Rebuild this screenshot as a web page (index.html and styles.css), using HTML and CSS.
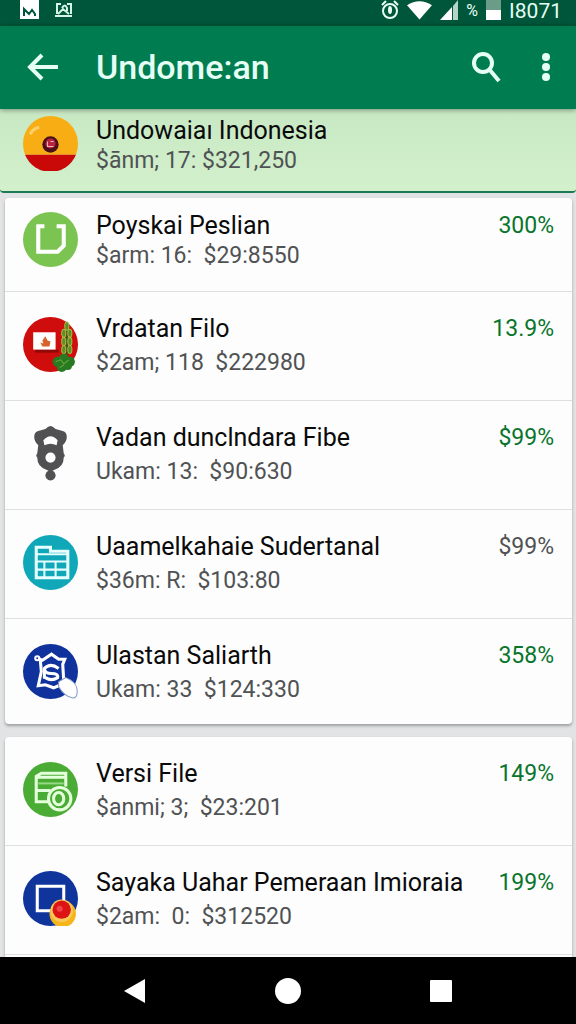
FILE: index.html
```html
<!DOCTYPE html>
<html lang="id">
<head>
  <meta charset="UTF-8" />
  <meta name="viewport" content="width=device-width, initial-scale=1" />
  <title>Undome:an</title>
  <link rel="stylesheet" href="styles.css">
</head>
<body>
  <div class="status">
    <svg class="status-icon" viewBox="0 0 20 20"><path fill="#fff" d="M0 0h19v19H0z"/><path fill="none" stroke="#00563a" stroke-width="2" d="M4 16V9l5 5 3-4 3 4v2"/></svg>
    <svg class="status-icon image" viewBox="0 0 18 20"><path fill="none" stroke="#d5f5e6" stroke-width="2" d="M6 4H2v10M12 4h4v10M0 16h17M3 14l5-5 6 5"/><path fill="none" stroke="#d5f5e6" stroke-width="2" d="M7 8q3-5 5 0v3"/></svg>
    <div class="status-right">
      <svg width="18" height="20" viewBox="0 0 18 20"><g fill="none" stroke="#e6fff4" stroke-width="2"><circle cx="9" cy="11" r="7"/><path d="M1 5l4-4M13 1l4 4"/></g><ellipse cx="9" cy="10" rx="2" ry="4" fill="#e6fff4"/></svg>
      <svg width="25" height="20" viewBox="0 0 26 20"><path fill="#fff" d="M13 20L0 5Q13-3 26 5z"/></svg>
      <svg width="18" height="20" viewBox="0 0 18 20"><path fill="#fff" d="M0 20L12 7v13z"/><path fill="#b5d3c6" d="M13 6l5-6v20h-5z"/></svg>
      <span class="percent">%</span>
      <svg width="15" height="20" viewBox="0 0 15 20"><path fill="#6a9c87" d="M0 0h15v10H0z"/><path fill="#fff" d="M0 10h15v10H0z"/></svg>
      <span class="clock">I8071</span>
    </div>
  </div>

  <header class="appbar">
    <button class="icon-button" aria-label="Kembali">
      <svg width="32" height="32" viewBox="0 0 32 32"><path fill="none" stroke="#e6fff4" stroke-width="4" d="M31 16H4M15 4L3 16l12 12"/></svg>
    </button>
    <h1>Undome:an</h1>
    <button class="icon-button" aria-label="Cari">
      <svg width="32" height="32" viewBox="0 0 32 32"><circle cx="13" cy="12" r="9" fill="none" stroke="#e6fff4" stroke-width="4"/><path stroke="#e6fff4" stroke-width="4" d="M19 18l10 12"/></svg>
    </button>
    <button class="icon-button more" aria-label="Menu">
      <svg width="8" height="28" viewBox="0 0 8 28"><g fill="#e6fff4"><circle cx="4" cy="4" r="4"/><circle cx="4" cy="14" r="4"/><circle cx="4" cy="24" r="4"/></g></svg>
    </button>
  </header>

  <main>
    <a class="row featured" href="#">
      <svg class="logo" viewBox="0 0 54 54"><path fill="#f9ad14" d="M0 27a27 27 0 0 1 54 0q0 6-2 11H2q-2-5-2-11z"/><path fill="#c90808" d="M2 38h50a27 27 0 0 1-50 0z"/><path fill="none" stroke="#fbd06a" stroke-width="3" d="M7 18q3-6 9-7"/><circle cx="27" cy="28" r="8" fill="#4a1018"/><circle cx="27" cy="27" r="5" fill="#b82340"/><path fill="none" stroke="#efb9c0" stroke-width="1" d="M24 25v5h6M27 25h3"/></svg>
      <div class="text">
        <div class="name">Undowaiaı Indonesia</div>
        <div class="detail">$ānm; 17: $321,250</div>
      </div>
    </a>

    <section class="card">
      <a class="row short" href="#">
        <svg class="logo" viewBox="0 0 54 54"><circle cx="27" cy="27" r="27" fill="#7cc451"/><path fill="none" stroke="#fff" stroke-width="4" d="M21 14h-6v25h19l6-6V14h-7"/></svg>
        <div class="text">
          <div class="name">Poyskai Peslian</div>
          <div class="detail">$arm: 16:&nbsp; $29:8550</div>
        </div>
        <div class="change">300%</div>
      </a>
      <a class="row" href="#">
        <svg class="logo" viewBox="0 0 54 54"><circle cx="27" cy="27" r="27" fill="#cf0d0d"/><path fill="#8f0909" d="M12 32h23v3H12z"/><path fill="#fff" d="M10 15h22v17H10z"/><path fill="#d9642b" d="M17 25l3 1-1-3 3-4 2 4 3 1-1 5h-7z"/><path stroke="#38591c" stroke-width="2" d="M44 7l-2 40"/><g fill="#5f8c24" stroke="#a3bd45" stroke-width="1"><ellipse cx="43" cy="9" rx="2" ry="4"/><ellipse cx="40" cy="16" rx="2" ry="4"/><ellipse cx="46" cy="16" rx="2" ry="4"/><ellipse cx="40" cy="24" rx="2" ry="4"/><ellipse cx="46" cy="24" rx="2" ry="4"/><ellipse cx="40" cy="32" rx="2" ry="4"/><ellipse cx="46" cy="32" rx="2" ry="4"/></g><g fill="#277a22"><circle cx="34" cy="44" r="5"/><circle cx="40" cy="41" r="5"/><circle cx="46" cy="44" r="5"/><circle cx="38" cy="49" r="5"/><circle cx="44" cy="48" r="4"/></g><path fill="none" stroke="#6dab35" stroke-width="1" d="M32 44l5-2 3 4 5-4M36 50l4-3"/></svg>
        <div class="text">
          <div class="name">Vrdatan Filo</div>
          <div class="detail">$2am; 118&nbsp; $222980</div>
        </div>
        <div class="change">13.9%</div>
      </a>
      <a class="row" href="#">
        <svg class="logo" viewBox="0 0 54 54"><path fill="#515154" fill-rule="evenodd" d="M27 0q2 0 5 3l7 2q4 1 4 6 0 4-4 8l1 8q2 2 0 4 0 9-9 12l-2 1a5 5 0 1 1-4 0l-2-1q-9-3-9-12-2-2 0-4l1-8q-4-4-4-8 0-5 4-6l7-2q3-3 5-3zM21 19q6-3 12 0l1-5q-7-8-14 0zM27 26a5 5 0 1 0 0 10 5 5 0 0 0 0-10z"/></svg>
        <div class="text">
          <div class="name">Vadan dunclndara Fibe</div>
          <div class="detail">Ukam: 13:&nbsp; $90:630</div>
        </div>
        <div class="change">$99%</div>
      </a>
      <a class="row" href="#">
        <svg class="logo" viewBox="0 0 54 54"><circle cx="27" cy="27" r="27" fill="#10a7b8"/><path fill="none" stroke="#e8ffff" stroke-width="3" d="M13 12h14v4h17v26H13z"/><path fill="none" stroke="#e8ffff" stroke-width="2" d="M13 19h31M13 26h30M13 34h30M21 26v16M32 26v16"/></svg>
        <div class="text">
          <div class="name">Uaamelkahaie Sudertanal</div>
          <div class="detail">$36m: R:&nbsp; $103:80</div>
        </div>
        <div class="change flat">$99%</div>
      </a>
      <a class="row" href="#">
        <svg class="logo" viewBox="0 0 54 54"><circle cx="27" cy="27" r="27" fill="#0f329c"/><g fill="none" stroke="#fff" stroke-width="3"><path d="M15 14l4 2 9-6 7 5h6l-2 5 1 16M17 16l1 11-3 14 7-1 8 3 5-2"/><circle cx="14" cy="14" r="2" stroke-width="2"/><path d="M35 24q-8-6-14 0 0 5 7 5 7 0 6 4-6 4-12 0M21 24v10"/></g><path fill="#fff" stroke="#8499c9" stroke-width="1" d="M35 37l7-4q10 4 11 11 1 9-4 9-8-1-14-11z"/></svg>
        <div class="text">
          <div class="name">Ulastan Saliarth</div>
          <div class="detail">Ukam: 33&nbsp; $124:330</div>
        </div>
        <div class="change">358%</div>
      </a>
    </section>

    <section class="card">
      <a class="row" href="#">
        <svg class="logo" viewBox="0 0 54 54"><circle cx="27" cy="27" r="27" fill="#4aac34"/><path fill="none" stroke="#e4ffdc" stroke-width="3" d="M25 39H13V14l5-3h24v13M13 15h28M13 28h14"/><path stroke="#93d982" stroke-width="2" d="M15 21h25"/><circle cx="36" cy="36" r="11" fill="#4aac34" stroke="#e4ffdc" stroke-width="3"/><ellipse cx="35" cy="36" rx="5" ry="6" fill="none" stroke="#e4ffdc" stroke-width="3"/></svg>
        <div class="text">
          <div class="name">Versi File</div>
          <div class="detail">$anmi; 3;&nbsp; $23:201</div>
        </div>
        <div class="change">149%</div>
      </a>
      <a class="row" href="#">
        <svg class="logo" viewBox="0 0 54 54"><circle cx="27" cy="27" r="27" fill="#0f349c"/><path fill="none" stroke="#fff" stroke-width="3" d="M14 15h26v24H14z"/><circle cx="39" cy="42" r="13" fill="#f7b51c"/><circle cx="38" cy="39" r="11" fill="#f9c95c"/><circle cx="38" cy="38" r="9" fill="#dc1414"/><circle cx="36" cy="37" r="3" fill="#f0444a"/></svg>
        <div class="text">
          <div class="name">Sayaka Uahar Pemeraan Imioraia</div>
          <div class="detail">$2am:&nbsp; 0:&nbsp; $312520</div>
        </div>
        <div class="change">199%</div>
      </a>
    </section>
  </main>

  <nav class="navbar">
    <button class="nav-button" aria-label="Kembali"><svg width="26" height="26" viewBox="0 0 26 26"><path fill="#fff" d="M2 13L23 1v24z"/></svg></button>
    <button class="nav-button" aria-label="Beranda"><svg width="26" height="26" viewBox="0 0 26 26"><circle cx="13" cy="13" r="13" fill="#fff"/></svg></button>
    <button class="nav-button" aria-label="Terbaru"><svg width="26" height="26" viewBox="0 0 26 26"><rect x="2" y="2" width="22" height="22" rx="1" fill="#fff"/></svg></button>
  </nav>
</body>
</html>
```
FILE: styles.css
```css
* {
  box-sizing: border-box;
}
body {
  margin: 0;
  height: 100vh;
  display: flex;
  flex-direction: column;
  font-family: Roboto, sans-serif;
  background-color: #e2e3e4;
  color: #0a0a0a;
}
button {
  border: 0;
  padding: 0;
  background: none;
  cursor: pointer;
}
svg {
  display: block;
  flex-shrink: 0;
}
.status {
  display: flex;
  flex-shrink: 0;
  height: 26px;
  padding: 0 14px 0 20px;
  background-color: #00563a;
  color: #e6fff4;
}
.status-icon {
  width: 20px;
  height: 20px;
}
.image {
  margin-left: 14px;
}
.status-right {
  display: flex;
  align-items: flex-start;
  gap: 8px;
  margin-left: auto;
}
.percent {
  font-size: 16px;
  line-height: 22px;
}
.clock {
  font-size: 21px;
  line-height: 22px;
}
.appbar {
  display: flex;
  flex-shrink: 0;
  align-items: center;
  height: 83px;
  padding: 0 18px 2px 19px;
  background-color: #007d50;
  z-index: 1;
  box-shadow: 0 1px 5px rgba(0,0,0,0.4);
}
h1 {
  flex: 1;
  margin: 0 0 0 29px;
  font-size: 34px;
  line-height: 40px;
  font-weight: 500;
  color: #e6fff4;
}
.icon-button {
  display: flex;
  align-items: center;
  justify-content: center;
  width: 48px;
  height: 48px;
}
.more {
  width: 24px;
  margin-left: 24px;
}
main {
  flex: 1;
  min-height: 0;
  overflow: hidden;
}
.row {
  display: flex;
  align-items: flex-start;
  min-height: 109px;
  padding: 22px 18px 0;
  border-bottom: 1px solid #dedfe0;
  color: inherit;
  text-decoration: none;
}
.logo {
  width: 55px;
  height: 55px;
  margin: 3px 18px 0 0;
}
.text {
  flex: 1;
  min-width: 0;
}
.name,
.detail,
.change {
  line-height: 30px;
  white-space: nowrap;
}
.name {
  font-size: 25px;
}
.detail {
  margin-top: 4px;
  font-size: 23px;
  color: #505254;
}
.change {
  font-size: 23px;
  color: #08752c;
}
.flat {
  color: #505254;
}
.card {
  margin: 0 4px 13px 5px;
  background-color: #fdfdfd;
  border-radius: 4px;
  box-shadow: 0 2px 3px rgba(0,0,0,0.3);
}
.card .row:last-child {
  min-height: 105px;
  border-bottom-color: transparent;
}
.short {
  min-height: 94px;
  padding-top: 13px;
}
.short .logo {
  margin-top: 1px;
}
.short .detail,
.featured .detail {
  margin-top: 0;
}
.featured {
  min-height: 84px;
  margin-bottom: 5px;
  padding: 7px 23px 0;
  background: linear-gradient(#c8e8c4, #d2f0cb);
  border-bottom: 2px solid #1b7a53;
  border-radius: 0 0 4px 4px;
}
.featured .logo {
  margin-top: 0;
}
.card:last-child {
  padding-bottom: 8px;
}
.card:last-child .row:last-child {
  min-height: 109px;
  border-bottom-color: #dedfe0;
}
.navbar {
  display: flex;
  flex-shrink: 0;
  align-items: center;
  justify-content: center;
  gap: 105px;
  height: 67px;
  background-color: #000;
}
.nav-button {
  display: flex;
  align-items: center;
  justify-content: center;
  width: 48px;
  height: 48px;
}
```
